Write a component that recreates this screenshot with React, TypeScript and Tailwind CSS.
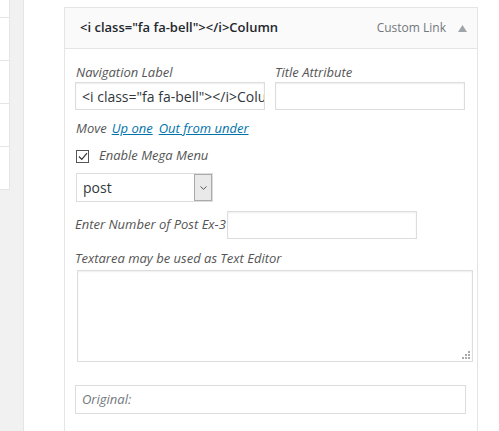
import React from "react";

const font = { fontFamily: '"Open Sans", "Liberation Sans", sans-serif' };

export default function App() {
  return (
    <div
      className="w-[499px] h-[431px] bg-[#f1f1f1] flex overflow-hidden text-[#555]"
      style={font}
    >
      {/* left strip */}
      <div className="w-[23px] flex-none">
        <div className="w-[10px] h-[190px] bg-white border-r border-b border-[#e5e5e5] flex flex-col">
          <div className="h-[18px] border-b border-[#e5e5e5]" />
          <div className="h-[43px] border-b border-[#e5e5e5]" />
          <div className="h-[43px] border-b border-[#e5e5e5]" />
          <div className="h-[43px] border-b border-[#e5e5e5]" />
        </div>
      </div>

      {/* main */}
      <div className="flex-1 bg-white border-l border-[#e5e5e5] pl-[40px] pt-[7px]">
        <div className="w-[414px] h-[430px] border border-b-0 border-[#e5e5e5] bg-white">
          {/* header */}
          <div className="h-[41px] bg-[#fafafa] border-b border-[#e5e5e5] flex items-center justify-between pl-[15px] pr-[10px]">
            <span className="text-[13px] font-semibold text-[#23282d] whitespace-nowrap">
              {'<i class="fa fa-bell"></i>Column'}
            </span>
            <div className="flex items-center gap-[12px]">
              <span className="text-[12px] text-[#72777c]">Custom Link</span>
              <svg width="9" height="7" viewBox="0 0 9 7">
                <path d="M4.5 0 L9 7 L0 7 Z" fill="#a0a5aa" />
              </svg>
            </div>
          </div>

          {/* body */}
          <div className="pl-[10px] pt-[14px] flex flex-col italic text-[13px]">
            <div className="flex gap-[10px]">
              <div className="w-[190px]">
                <div className="h-[18px] leading-[18px] pl-[1px]">Navigation Label</div>
                <div className="mt-[1px] h-[28px] border border-[#ddd] shadow-[inset_0_1px_2px_rgba(0,0,0,0.07)] flex items-center pl-[6px] overflow-hidden not-italic text-[14px] text-[#32373c] whitespace-nowrap">
                  {'<i class="fa fa-bell"></i>Column'}
                </div>
              </div>
              <div className="w-[190px]">
                <div className="h-[18px] leading-[18px]">Title Attribute</div>
                <div className="mt-[1px] h-[28px] border border-[#ddd] shadow-[inset_0_1px_2px_rgba(0,0,0,0.07)]" />
              </div>
            </div>

            <div className="mt-[9px] h-[18px] leading-[18px] pl-[1px] flex gap-[5px]">
              <span>Move</span>
              <span className="text-[#0073aa] underline">Up one</span>
              <span className="text-[#0073aa] underline ml-[1px]">Out from under</span>
            </div>

            <div className="mt-[10px] h-[18px] flex items-center pl-[1px]">
              <div className="w-[13px] h-[13px] border border-[#555] flex items-center justify-center bg-white">
                <svg width="10" height="9" viewBox="0 0 10 9">
                  <path d="M1 4.5 L3.8 7.3 L9 1.2" stroke="#333" strokeWidth="1.2" fill="none" />
                </svg>
              </div>
              <span className="ml-[10px]">Enable Mega Menu</span>
            </div>

            <div className="mt-[8px] ml-[1px] w-[137px] h-[29px] border border-[#ddd] flex not-italic">
              <div className="flex-1 flex items-center pl-[6px] text-[14px] text-[#32373c]">post</div>
              <div className="w-[18px] bg-[#e9e9e9] border border-[#aaa] flex items-center justify-center">
                <svg width="7" height="4" viewBox="0 0 7 4">
                  <path d="M0.5 0.5 L3.5 3.3 L6.5 0.5" stroke="#555" strokeWidth="1" fill="none" />
                </svg>
              </div>
            </div>

            <div className="mt-[9px] flex items-center">
              <span className="whitespace-nowrap">Enter Number of Post Ex-3</span>
              <div className="ml-[1px] w-[190px] h-[28px] border border-[#ddd] shadow-[inset_0_1px_2px_rgba(0,0,0,0.07)]" />
            </div>

            <div className="mt-[10px] h-[18px] leading-[18px]">Textarea may be used as Text Editor</div>
            <div className="mt-[3px] ml-[2px] w-[396px] h-[92px] border border-[#ddd] shadow-[inset_0_1px_2px_rgba(0,0,0,0.07)] flex items-end justify-end p-[2px]">
              <svg width="8" height="8" viewBox="0 0 8 8">
                <rect x="6" y="0" width="2" height="2" fill="#aaa" />
                <rect x="3" y="3" width="2" height="2" fill="#aaa" />
                <rect x="6" y="3" width="2" height="2" fill="#aaa" />
                <rect x="0" y="6" width="2" height="2" fill="#aaa" />
                <rect x="3" y="6" width="2" height="2" fill="#aaa" />
                <rect x="6" y="6" width="2" height="2" fill="#aaa" />
              </svg>
            </div>

            <div className="mt-[23px] w-[391px] h-[29px] border border-[#ddd] flex items-center pl-[6px] text-[#72777c]">
              Original:
            </div>
          </div>
        </div>
      </div>
    </div>
  );
}
